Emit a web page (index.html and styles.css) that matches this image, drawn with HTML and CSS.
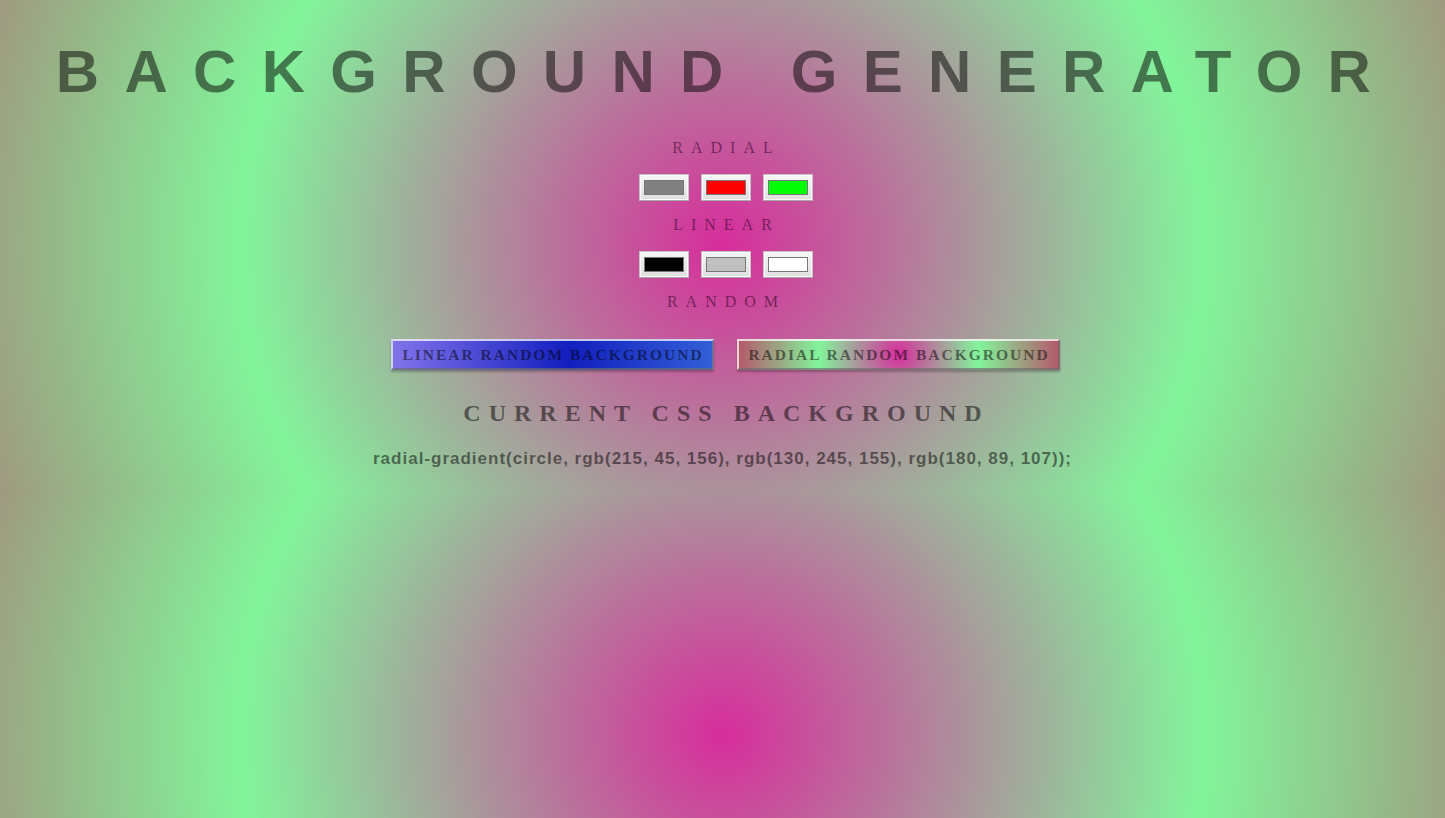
FILE: index.html
```html
<!DOCTYPE html>
<html lang="en">
<head>
<meta charset="utf-8">
<title>Background Generator</title>
<link rel="stylesheet" href="styles.css">
</head>
<body>
<main class="app">
  <h1 class="title">BACKGROUND GENERATOR</h1>
  <section class="controls">
    <h3 class="label">RADIAL</h3>
    <div class="swatches">
      <button class="swatch" type="button"><span class="chip chip-gray"></span></button>
      <button class="swatch" type="button"><span class="chip chip-red"></span></button>
      <button class="swatch" type="button"><span class="chip chip-green"></span></button>
    </div>
    <h3 class="label label-linear">LINEAR</h3>
    <div class="swatches">
      <button class="swatch" type="button"><span class="chip chip-black"></span></button>
      <button class="swatch" type="button"><span class="chip chip-silver"></span></button>
      <button class="swatch" type="button"><span class="chip chip-white"></span></button>
    </div>
    <h3 class="label label-random">RANDOM</h3>
    <div class="random-row">
      <button class="random-btn random-linear" type="button">LINEAR RANDOM BACKGROUND</button>
      <button class="random-btn random-radial" type="button">RADIAL RANDOM BACKGROUND</button>
    </div>
  </section>
  <h2 class="current-title">CURRENT CSS BACKGROUND</h2>
  <p class="css-code">radial-gradient(circle, rgb(215, 45, 156), rgb(130, 245, 155), rgb(180, 89, 107));</p>
</main>
</body>
</html>
```
FILE: styles.css
```css
html {
  min-height: 100%;
  background-color: rgb(180, 89, 107);
  background-image: radial-gradient(circle 964px at 50% 50%, rgb(215, 45, 156), rgb(130, 245, 155), rgb(180, 89, 107));
  background-size: 100% 490px;
  background-position: center 0;
  background-repeat: repeat;
}

body {
  margin: 0;
  color: rgba(0, 0, 0, 0.5);
}

.app {
  display: flex;
  flex-direction: column;
  align-items: center;
  padding-top: 38px;
}

.title {
  margin: 0;
  font-family: "Liberation Sans", Arial, sans-serif;
  font-weight: 700;
  font-size: 60px;
  line-height: 67px;
  letter-spacing: 25.3px;
  padding-left: 7px;
  text-align: center;
}

.controls {
  display: flex;
  flex-direction: column;
  align-items: center;
  margin-top: 34px;
}

.label {
  margin: 0;
  font-family: "Liberation Serif", "Times New Roman", serif;
  font-weight: 400;
  font-size: 16px;
  line-height: 18px;
  letter-spacing: 8px;
  padding-left: 8px;
  color: rgba(40, 0, 30, 0.55);
}

.swatches {
  display: flex;
  gap: 12px;
  margin-top: 17px;
  padding-left: 7px;
}

.label-linear,
.label-random {
  margin-top: 15px;
}

.swatch {
  width: 50px;
  height: 27px;
  box-sizing: border-box;
  padding: 0;
  margin: 0;
  border: 1px solid #c4c4c4;
  border-bottom-color: #a9a9a9;
  box-shadow: inset 0 0 0 1px #fafafa;
  background: linear-gradient(#f6f6f6, #dfdfdf);
  display: flex;
  align-items: center;
  justify-content: center;
}

.chip {
  display: block;
  width: 40px;
  height: 15px;
  box-sizing: border-box;
  border: 1px solid #777777;
}

.chip-gray { background: #808080; }
.chip-red { background: #ff0000; }
.chip-green { background: #00ff00; }
.chip-black { background: #000000; }
.chip-silver { background: #c0c0c0; }
.chip-white { background: #ffffff; }

.random-row {
  display: flex;
  gap: 23px;
  margin-top: 28px;
  padding-left: 6px;
}

.random-btn {
  width: 323px;
  height: 31px;
  box-sizing: border-box;
  margin: 0;
  padding: 0 0 0 1px;
  border: 2px solid;
  border-color: rgba(255, 255, 255, 0.75) rgba(110, 110, 110, 0.7) rgba(110, 110, 110, 0.7) rgba(255, 255, 255, 0.75);
  font-family: "Liberation Serif", "Times New Roman", serif;
  font-weight: 700;
  font-size: 15.5px;
  letter-spacing: 2px;
  color: rgba(0, 0, 0, 0.5);
  text-align: center;
  box-shadow: 0 2px 2px rgba(0, 0, 0, 0.25);
}

.random-linear {
  background: linear-gradient(to right, rgb(130, 115, 235), rgb(18, 30, 190) 55%, rgb(50, 95, 215));
}

.random-radial {
  background: radial-gradient(circle, rgb(215, 45, 156), rgb(130, 245, 155), rgb(180, 89, 107));
}

.current-title {
  margin: 29px 0 0;
  font-family: "Liberation Serif", "Times New Roman", serif;
  font-weight: 700;
  font-size: 24px;
  line-height: 28px;
  letter-spacing: 8px;
  padding-left: 8px;
}

.css-code {
  margin: 22px 0 0;
  font-family: "Liberation Sans", Arial, sans-serif;
  font-weight: 700;
  font-size: 17px;
  line-height: 20px;
  letter-spacing: 1px;
}
```
